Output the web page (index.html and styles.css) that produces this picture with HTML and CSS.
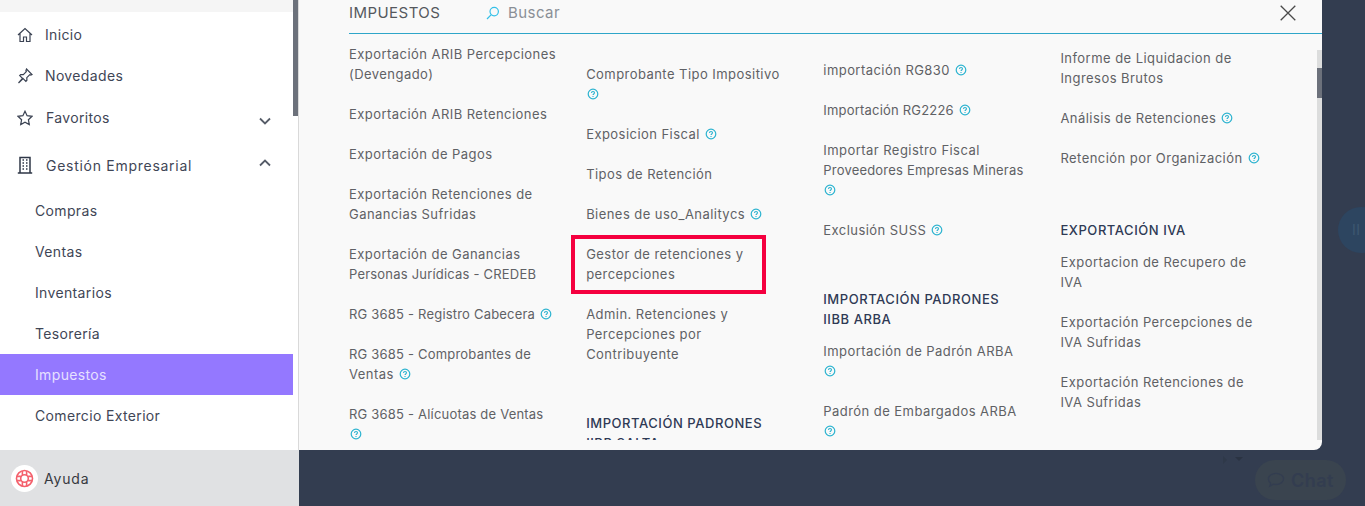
FILE: index.html
```html
<!DOCTYPE html>
<html lang="es">
<head>
    <meta charset="UTF-8">
    <title>Impuestos</title>
    <link rel="stylesheet" href="styles.css">
</head>
<body>

<svg class="defs" width="0" height="0">
    <symbol id="help" viewBox="0 0 12 12">
        <circle cx="6" cy="6" r="4.8" fill="none" stroke="currentColor" stroke-width="1.2"/>
        <path d="M4.500 4.900c0-.9.7-1.400 1.500-1.400s1.500.5 1.500 1.300c0 1.100-1.500 1.200-1.500 2.300M6 8.100v.8" fill="none" stroke="currentColor" stroke-width="1.100"/>
    </symbol>
</svg>

<aside class="sidebar">
    <div class="sidebar-top"></div>
    <nav class="nav">
        <a class="nav-item">
            <svg class="nav-icon" viewBox="0 0 16 16"><path d="M1 8l7-6.500L15 8M3 6.500V14.500h3.500V10h3v4.500H13V6.500"/></svg>
            <span>Inicio</span>
        </a>
        <a class="nav-item">
            <svg class="nav-icon" viewBox="0 0 16 16"><path d="M9.500 1l5.500 5.500-1.200.6-1-.4-3 3 .1 2.600-1 1-2.800-2.800L1.500 15l4-4.600L2.700 7.600l1-1 2.600.1 3-3-.4-1z"/></svg>
            <span>Novedades</span>
        </a>
        <a class="nav-item nav-item-fav">
            <svg class="nav-icon" viewBox="0 0 16 16"><path d="M8 1.200l2.100 4.500 4.900.6-3.600 3.400.9 4.900L8 12.200l-4.300 2.400.9-4.900L1 6.300l4.900-.6z"/></svg>
            <span class="nav-label">Favoritos</span>
            <svg class="chevron chevron-down" viewBox="0 0 12 8"><path d="M1 1.500l5 5 5-5"/></svg>
        </a>
        <a class="nav-item nav-item-group">
            <svg class="nav-icon icon-building" viewBox="0 0 16 18"><path d="M3 17V1.500h10V17M.8 17h14.400"/><path class="windows" d="M5.500 4h1.500M9 4h1.500M5.500 7h1.500M9 7h1.500M5.500 10h1.500M9 10h1.500M5.500 13h1.500M9 13h1.500"/></svg>
            <span class="nav-label nav-label-wide">Gestión Empresarial</span>
            <svg class="chevron chevron-up" viewBox="0 0 12 8"><path d="M1 6.500l5-5 5 5"/></svg>
        </a>
        <ul class="subnav">
            <li>Compras</li>
            <li>Ventas</li>
            <li>Inventarios</li>
            <li>Tesorería</li>
            <li class="active">Impuestos</li>
            <li>Comercio Exterior</li>
        </ul>
    </nav>
    <div class="side-scroll"></div>
</aside>

<main class="main">
    <section class="panel">
        <header class="panel-head">
            <h1 class="panel-title">IMPUESTOS</h1>
            <svg class="search-icon" viewBox="0 0 14 14"><circle cx="8.200" cy="5.600" r="4.200"/><path d="M5 8.800L1 13"/></svg>
            <span class="search-text">Buscar</span>
            <svg class="close-icon" viewBox="0 0 16 16"><path d="M.7.7l14.600 14.600M15.300.7L.7 15.300"/></svg>
        </header>
        <div class="panel-body">
            <div class="col col-1">
                <a class="item">Exportación ARIB Percepciones<br>(Devengado)</a>
                <a class="item">Exportación ARIB Retenciones</a>
                <a class="item">Exportación de Pagos</a>
                <a class="item">Exportación Retenciones de<br>Ganancias Sufridas</a>
                <a class="item">Exportación de Ganancias<br><span class="tight">Personas Jurídicas - CREDEB</span></a>
                <a class="item"><span class="tight">RG 3685 - Registro Cabecera</span> <svg class="help"><use href="#help"/></svg></a>
                <a class="item"><span class="tight">RG 3685 - Comprobantes de</span><br>Ventas <svg class="help"><use href="#help"/></svg></a>
                <a class="item"><span class="tight">RG 3685 - Alícuotas de Ventas</span><br><svg class="help"><use href="#help"/></svg></a>
            </div>
            <div class="col col-2">
                <a class="item">Comprobante Tipo Impositivo<br><svg class="help"><use href="#help"/></svg></a>
                <a class="item">Exposicion Fiscal <svg class="help"><use href="#help"/></svg></a>
                <a class="item">Tipos de Retención</a>
                <a class="item">Bienes de uso_Analitycs <svg class="help"><use href="#help"/></svg></a>
                <a class="item item-marked">Gestor de retenciones y<br>percepciones<span class="mark"></span></a>
                <a class="item">Admin. Retenciones y<br>Percepciones por<br>Contribuyente</a>
                <h2 class="group-title">IMPORTACIÓN PADRONES<br>IIBB SALTA</h2>
            </div>
            <div class="col col-3">
                <a class="item">importación RG830 <svg class="help"><use href="#help"/></svg></a>
                <a class="item"><span class="tight">Importación RG2226</span> <svg class="help"><use href="#help"/></svg></a>
                <a class="item">Importar Registro Fiscal<br><span class="tight">Proveedores Empresas Mineras</span><br><svg class="help"><use href="#help"/></svg></a>
                <a class="item">Exclusión SUSS <svg class="help"><use href="#help"/></svg></a>
                <h2 class="group-title">IMPORTACIÓN PADRONES<br>IIBB ARBA</h2>
                <a class="item">Importación de Padrón ARBA<br><svg class="help"><use href="#help"/></svg></a>
                <a class="item">Padrón de Embargados ARBA<br><svg class="help"><use href="#help"/></svg></a>
            </div>
            <div class="col col-4">
                <a class="item">Informe de Liquidacion de<br>Ingresos Brutos</a>
                <a class="item">Análisis de Retenciones <svg class="help"><use href="#help"/></svg></a>
                <a class="item">Retención por Organización <svg class="help"><use href="#help"/></svg></a>
                <h2 class="group-title">EXPORTACIÓN IVA</h2>
                <a class="item">Exportacion de Recupero de<br>IVA</a>
                <a class="item">Exportación Percepciones de<br>IVA Sufridas</a>
                <a class="item">Exportación Retenciones de<br>IVA Sufridas</a>
            </div>
            <div class="scroll-track"><div class="scroll-thumb"></div></div>
        </div>
    </section>
</main>

<footer class="help-bar">
    <span class="help-badge">
        <svg viewBox="0 0 18 18"><circle cx="9" cy="9" r="7.600"/><circle cx="9" cy="9" r="3.600"/><path d="M7 1.800v3.800M11 1.800v3.800M7 12.400v3.800M11 12.400v3.800M1.800 7h3.800M1.800 11h3.800M12.400 7h3.800M12.400 11h3.800"/></svg>
    </span>
    <span class="help-label">Ayuda</span>
</footer>

<!-- widgets under the dark overlay -->
<div class="float-btn">II</div>
<div class="tiny-arrows"></div>
<div class="chat-btn">
    <svg viewBox="0 0 20 18"><path d="M10 1.500c4.700 0 8.500 2.800 8.500 6.300s-3.800 6.300-8.500 6.300c-1 0-2-.1-2.900-.4L3 16l1-3.300C2.500 11.500 1.500 9.800 1.500 7.800 1.500 4.300 5.300 1.500 10 1.500z"/></svg>
    <span>Chat</span>
</div>

</body>
</html>
```

FILE: styles.css
```css
* {
    box-sizing: border-box;
}
body {
    margin: 0;
    width: 1365px;
    height: 506px;
    overflow: hidden;
    position: relative;
    display: flex;
    background-color: #333d50;
    font-family: Inter, 'Noto Sans', sans-serif;
    font-size: 13px;
    letter-spacing: 0.45px;
    color: #5f6165;
}
.defs {
    position: absolute;
}

/* Sidebar */
.sidebar {
    position: relative;
    width: 299px;
    height: 450px;
    background-color: #fff;
    border-right: 1px solid #d9d9d9;
    flex-shrink: 0;
    font-size: 14px;
    letter-spacing: 0.35px;
    color: #3f4656;
}
.sidebar-top {
    height: 12px;
    background-color: #f5f5f5;
    margin-right: 5px;
}
.nav {
    padding-top: 2px;
}
.nav-item {
    display: flex;
    align-items: center;
    height: 41px;
    padding: 0 27px 0 17px;
}
.nav-icon {
    width: 16px;
    height: 16px;
    margin-right: 12px;
    fill: none;
    stroke: #3a4252;
    stroke-width: 1.2;
}
.icon-building {
    height: 18px;
    stroke: #2f3747;
    stroke-width: 1.5;
}
.icon-building .windows {
    stroke-width: 1.700;
}
.nav-item-fav {
    height: 42px;
}
.nav-item-fav .nav-icon {
    margin-top: 2px;
}
.nav-item-group {
    height: 42px;
    margin-top: 6px;
}
.nav-label {
    flex: 1;
    margin-left: 1px;
}
.nav-label-wide {
    letter-spacing: 0.72px;
}
.chevron {
    width: 12px;
    height: 8px;
    fill: none;
    stroke: #565c68;
    stroke-width: 1.8;
}
.chevron-down {
    margin: 7px 0 0 0;
}
.chevron-up {
    margin: 0 0 5px 0;
}
.subnav {
    list-style: none;
    margin: 4px 5px 0 0;
    padding: 0;
}
.subnav li {
    height: 41px;
    line-height: 41px;
    padding-left: 35px;
}
.subnav .active {
    background-color: #9478ff;
    color: #e6e0ff;
}
.side-scroll {
    position: absolute;
    top: 0;
    right: 0;
    width: 5px;
    height: 116px;
    background-color: #6c717b;
}
.help-bar {
    position: absolute;
    left: 0;
    bottom: 0;
    width: 299px;
    height: 56px;
    padding-left: 11px;
    display: flex;
    align-items: center;
    gap: 6px;
    background-color: #e0e1e3;
    font-size: 14px;
    color: #37393f;
}
.help-label {
    letter-spacing: 0.8px;
}
.help-badge {
    width: 27px;
    height: 27px;
    border-radius: 50%;
    background-color: #fff;
    display: flex;
    align-items: center;
    justify-content: center;
}
.help-badge svg {
    width: 19px;
    height: 19px;
    fill: none;
    stroke: #f4606c;
    stroke-width: 1.5;
}

/* Panel */
.panel {
    width: 1023px;
    height: 450px;
    background-color: #f9f9f9;
    border-bottom-right-radius: 8px;
    overflow: hidden;
}
.panel-head {
    height: 34px;
    margin-left: 50px;
    padding-bottom: 8px;
    border-bottom: 1px solid #2ea6c9;
    display: flex;
    align-items: center;
}
.panel-title {
    margin: 0;
    width: 137px;
    font-size: 15px;
    font-weight: 400;
    color: #55585d;
}
.search-icon {
    width: 14px;
    height: 14px;
    margin-right: 8px;
    fill: none;
    stroke: #35c0e8;
    stroke-width: 1.2;
}
.search-text {
    flex: 1;
    font-size: 15px;
    color: #8a8f96;
}
.close-icon {
    width: 16px;
    height: 16px;
    margin-right: 26px;
    fill: none;
    stroke: #4a4a4a;
    stroke-width: 1.3;
}
.panel-body {
    position: relative;
    height: 406px;
    padding-left: 50px;
    display: flex;
    overflow: hidden;
}
.col {
    width: 237.15px;
    flex-shrink: 0;
}
.col-1 {
    padding-top: 10px;
}
.col-2 {
    padding-top: 30px;
}
.col-3 {
    padding-top: 26px;
}
.col-4 {
    padding-top: 14px;
}
.item {
    display: block;
    line-height: 20px;
    margin-bottom: 20px;
    white-space: nowrap;
}
.tight {
    letter-spacing: 0.2px;
}
.item-marked {
    position: relative;
}
.mark {
    position: absolute;
    top: -9px;
    left: -15px;
    width: 195px;
    height: 59px;
    border: 4px solid #f5003f;
}
.help {
    width: 12px;
    height: 12px;
    margin-left: 1px;
    vertical-align: -1px;
    color: #2bb3d0;
}
.group-title {
    margin: 49px 0 12px;
    font-size: 13px;
    line-height: 20px;
    font-weight: 500;
    letter-spacing: 0.55px;
    color: #2f3a55;
    white-space: nowrap;
}
.col-4 .group-title {
    margin-top: 52px;
}
.scroll-track {
    position: absolute;
    top: 16px;
    right: 0;
    width: 5px;
    height: 390px;
    background-color: #dcdddd;
}
.scroll-thumb {
    margin-top: 18px;
    height: 30px;
    background-color: #6c717b;
}

/* Floating widgets, dimmed by the overlay */
.float-btn {
    position: absolute;
    left: 1338px;
    top: 207px;
    width: 46px;
    height: 46px;
    border-radius: 50%;
    background-color: #2d4560;
    color: #3d5770;
    line-height: 46px;
    padding-left: 14px;
    font-size: 14px;
}
.tiny-arrows {
    position: absolute;
    left: 1235px;
    top: 457px;
    border-left: 4px solid transparent;
    border-right: 4px solid transparent;
    border-top: 4px solid #2a3342;
}
.tiny-arrows::before {
    content: "";
    position: absolute;
    left: -16px;
    top: -5px;
    border-top: 4px solid transparent;
    border-bottom: 4px solid transparent;
    border-left: 4px solid #2f3949;
}
.chat-btn {
    position: absolute;
    left: 1255px;
    top: 460px;
    width: 91px;
    height: 40px;
    border-radius: 20px;
    background-color: #3a444f;
    display: flex;
    align-items: center;
    justify-content: center;
    gap: 6px;
    font-size: 18px;
    font-weight: 600;
    color: #333d50;
}
.chat-btn svg {
    width: 18px;
    height: 16px;
    fill: none;
    stroke: #333d50;
    stroke-width: 1.5;
}
```
